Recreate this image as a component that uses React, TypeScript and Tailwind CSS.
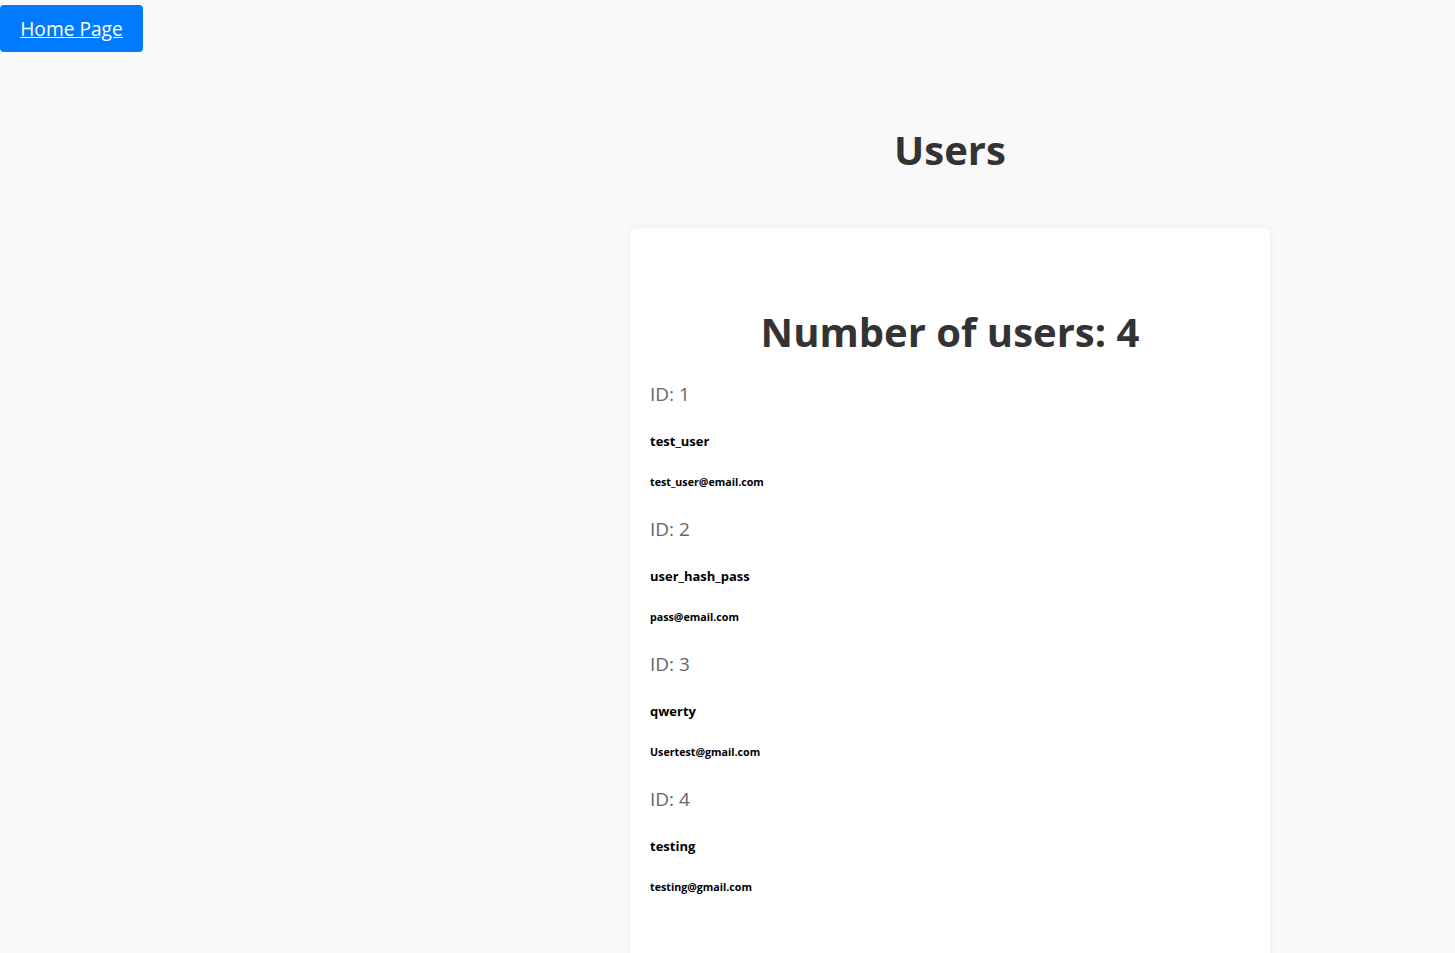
import React from 'react';

interface User {
  id: number;
  username: string;
  email: string;
}

const users: User[] = [
  { id: 1, username: 'test_user', email: 'test_user@email.com' },
  { id: 2, username: 'user_hash_pass', email: 'pass@email.com' },
  { id: 3, username: 'qwerty', email: 'Usertest@gmail.com' },
  { id: 4, username: 'testing', email: 'testing@gmail.com' },
];

const UserItem: React.FC<{ user: User }> = ({ user }) => (
  <div className="pb-[26px]">
    <p className="text-[19px] leading-[26px] text-[#666]">ID: {user.id}</p>
    <h5 className="mt-[25px] text-[13px] leading-[18px] font-bold text-black">{user.username}</h5>
    <h6 className="mt-[25px] text-[10.7px] leading-[15px] font-bold text-black">{user.email}</h6>
  </div>
);

const App: React.FC = () => {
  return (
    <div className="min-h-screen bg-[#f9f9f9] text-[#333]" style={{ fontFamily: '"Open Sans", "Noto Sans", sans-serif' }}>
      <div className="pt-[5px]">
        <a
          href="#"
          className="inline-flex items-center justify-center h-[47px] w-[143px] pt-[2px] rounded-[4px] bg-[#007bff] text-[19.2px] text-white underline"
        >
          Home Page
        </a>
      </div>

      <div className="flex">
        <div className="w-[445px] shrink-0" />
        <main className="flex-1 flex flex-col items-center">
          <h1 className="mt-[73px] text-[40px] leading-[50px] font-bold text-[#333]">Users</h1>

          <div className="mt-[53px] w-[640px] rounded-[8px] bg-white px-5 pt-[79px] pb-[80px] shadow-[0_0_8px_rgba(0,0,0,0.06)]">
            <h2 className="text-center text-[40px] leading-[50px] font-bold text-[#333]">Number of users: {users.length}</h2>
            <div className="mt-[24px]">
              {users.map((u) => (
                <UserItem key={u.id} user={u} />
              ))}
            </div>
          </div>
        </main>
      </div>
    </div>
  );
};

export default App;
